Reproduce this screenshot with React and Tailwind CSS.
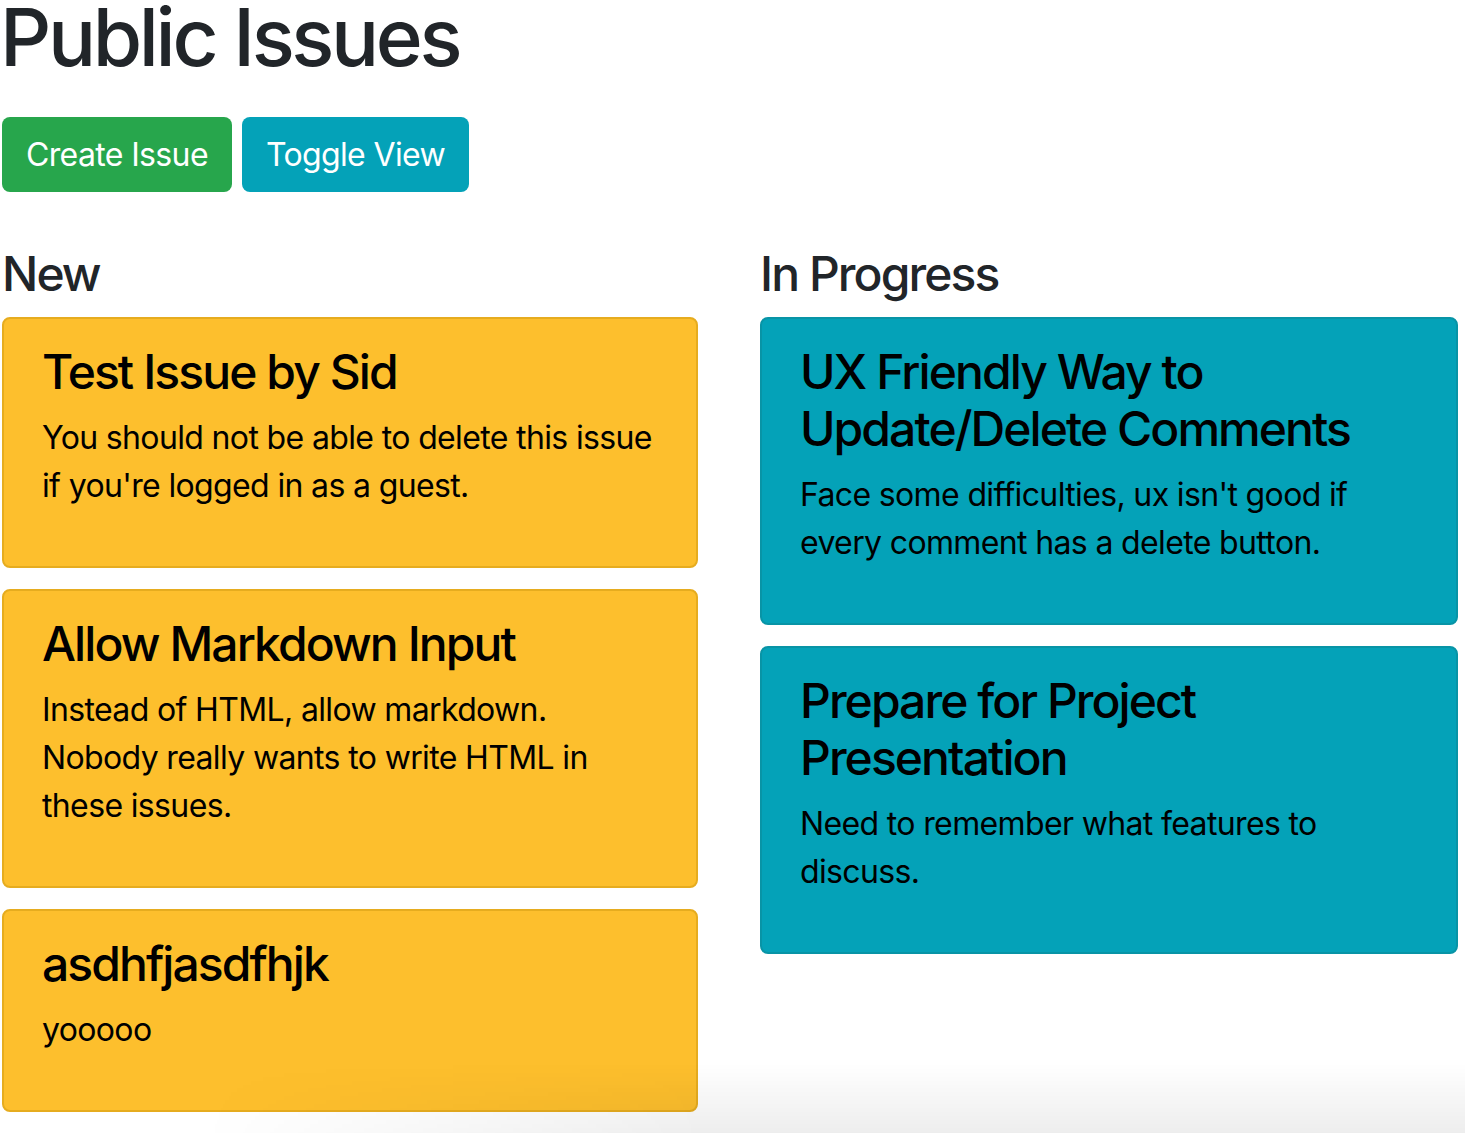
import React from 'react';

const newIssues = [
    {
        id: 1,
        title: 'Test Issue by Sid',
        body: "You should not be able to delete this issue if you're logged in as a guest.",
    },
    {
        id: 2,
        title: 'Allow Markdown Input',
        body: 'Instead of HTML, allow markdown. Nobody really wants to write HTML in these issues.',
    },
    {
        id: 3,
        title: 'asdhfjasdfhjk',
        body: 'yooooo',
    },
];

const inProgress = [
    {
        id: 4,
        title: 'UX Friendly Way to Update/Delete Comments',
        body: "Face some difficulties, ux isn't good if every comment has a delete button.",
    },
    {
        id: 5,
        title: 'Prepare for Project Presentation',
        body: 'Need to remember what features to discuss.',
    },
];

const IssueCard = ({ issue, tone }) => (
    <div
        className={`rounded-[8px] border-2 px-[38px] pt-[24px] pb-[56px] text-black ${
            tone === 'warning' ? 'bg-[#fdbf2d] border-[#e6ac1f]' : 'bg-[#04a2b8] border-[#0894a6]'
        }`}
    >
        <h4 className="text-[48px] leading-[57px] font-medium tracking-[-0.04em] mb-[14px]">{issue.title}</h4>
        <p className="text-[32px] leading-[48px] tracking-[-0.02em]">{issue.body}</p>
    </div>
);

const App = () => {
    return (
        <div className="relative min-h-screen overflow-hidden bg-white text-[#212529] font-['Inter','Liberation_Sans',sans-serif]">
            <h1 className="text-[80px] leading-[74px] font-medium tracking-[-0.042em]">Public Issues</h1>

            {/* Botones */}
            <div className="flex gap-[10px] mt-[43px] pl-[2px]">
                <button className="h-[75px] px-[24px] rounded-[8px] bg-[#27a64c] text-white text-[32px] tracking-[-0.02em]">
                    Create Issue
                </button>
                <button className="h-[75px] px-[24px] rounded-[8px] bg-[#04a2b8] text-white text-[32px] tracking-[-0.02em]">
                    Toggle View
                </button>
            </div>

            {/* Columnas */}
            <div className="grid grid-cols-[696px_698px] gap-x-[62px] pl-[2px] mt-[53px]">
                <div>
                    <h4 className="text-[48px] leading-[57.6px] font-medium tracking-[-0.04em] mb-[14px]">New</h4>
                    <div className="flex flex-col gap-[21px]">
                        {newIssues.map(issue => (
                            <IssueCard key={issue.id} issue={issue} tone="warning" />
                        ))}
                    </div>
                </div>
                <div>
                    <h4 className="text-[48px] leading-[57.6px] font-medium tracking-[-0.04em] mb-[14px]">In Progress</h4>
                    <div className="flex flex-col gap-[21px]">
                        {inProgress.map(issue => (
                            <IssueCard key={issue.id} issue={issue} tone="info" />
                        ))}
                    </div>
                </div>
            </div>

            {/* sombra inferior de la ventana */}
            <div className="pointer-events-none absolute left-[200px] right-0 bottom-0 h-[70px] bg-gradient-to-b from-transparent to-black/[0.07] [mask-image:linear-gradient(to_right,transparent,black_40%)]" />
        </div>
    );
};

export default App;
